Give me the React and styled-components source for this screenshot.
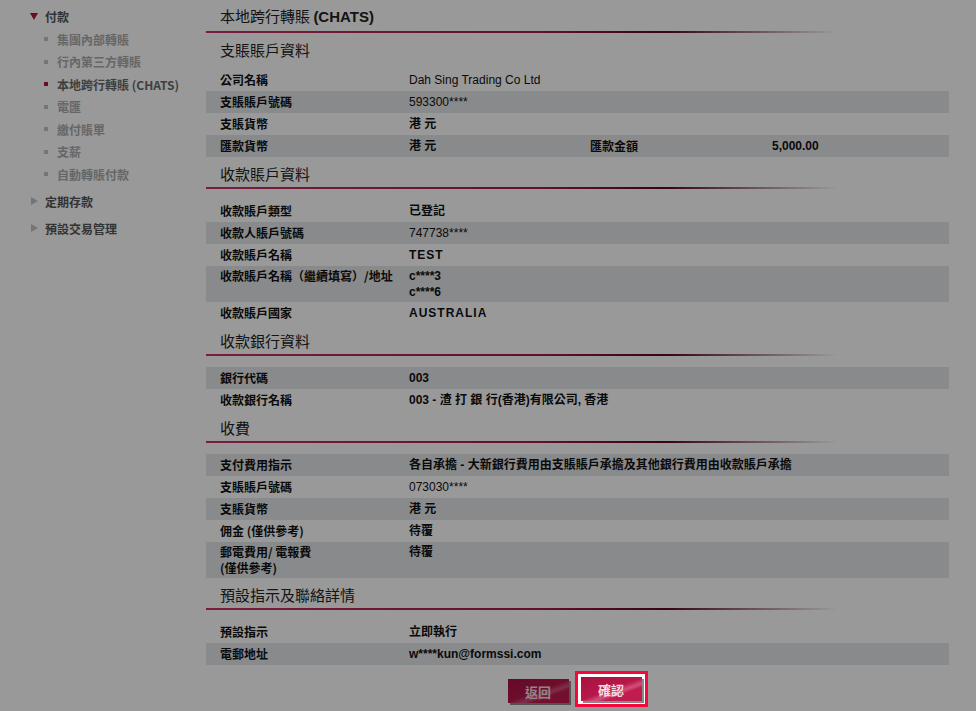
import React from 'react';
import styled, {createGlobalStyle} from 'styled-components';

const GlobalStyle = createGlobalStyle`
    html, body {
        margin: 0;
        padding: 0;
        background: #fff;
    }
    body {
        font-family: "Liberation Sans", "Noto Sans CJK TC", sans-serif;
        font-size: 12px;
        color: #000;
    }
`;

const menu = [
    {label: '付款', open: true, children: [
        {label: '集團內部轉賬'},
        {label: '行內第三方轉賬'},
        {label: '本地跨行轉賬 (CHATS)', active: true},
        {label: '電匯'},
        {label: '繳付賬單'},
        {label: '支薪'},
        {label: '自動轉賬付款'},
    ]},
    {label: '定期存款'},
    {label: '預設交易管理'},
];

// striped follows a running count across the whole page
const sections = [
    {title: '支賬賬戶資料', noLine: true, rows: [
        {label: '公司名稱', value: 'Dah Sing Trading Co Ltd', plain: true},
        {label: '支賬賬戶號碼', value: '593300****', plain: true},
        {label: '支賬貨幣', value: '港 元'},
        {label: '匯款貨幣', value: '港 元', label2: '匯款金額', value2: '5,000.00'},
    ]},
    {title: '收款賬戶資料', rows: [
        {label: '收款賬戶類型', value: '已登記'},
        {label: '收款人賬戶號碼', value: '747738****', plain: true},
        {label: '收款賬戶名稱', value: 'TEST', wide: true},
        {label: '收款賬戶名稱（繼續填寫）/地址', value: ['c****3', 'c****6']},
        {label: '收款賬戶國家', value: 'AUSTRALIA', wide: true},
    ]},
    {title: '收款銀行資料', rows: [
        {label: '銀行代碼', value: '003'},
        {label: '收款銀行名稱', value: '003 - 渣 打 銀 行(香港)有限公司, 香港'},
    ]},
    {title: '收費', rows: [
        {label: '支付費用指示', value: '各自承擔 - 大新銀行費用由支賬賬戶承擔及其他銀行費用由收款賬戶承擔'},
        {label: '支賬賬戶號碼', value: '073030****', plain: true},
        {label: '支賬貨幣', value: '港 元'},
        {label: '佣金 (僅供參考)', value: '待覆'},
        {label: ['郵電費用/ 電報費', '(僅供參考)'], value: '待覆'},
    ]},
    {title: '預設指示及聯絡詳情', rows: [
        {label: '預設指示', value: '立即執行'},
        {label: '電郵地址', value: 'w****kun@formssi.com'},
    ]},
];

const lines = (v) => Array.isArray(v) ? v.map((t, i) => <div key={i}>{t}</div>) : v;

const App = () => {
    let count = 0;
    return (
        <>
        <GlobalStyle />
        <Page>
            <Sidebar>
                {menu.map((m) => (
                    <MenuGroup key={m.label}>
                        <MenuItem>
                            <Arrow $open={m.open} />
                            {m.label}
                        </MenuItem>
                        {m.children && m.children.map((c) => (
                            <SubItem key={c.label} $active={c.active}>
                                <Bullet $active={c.active} />
                                {c.label}
                            </SubItem>
                        ))}
                    </MenuGroup>
                ))}
            </Sidebar>

            <Main>
                <PageTitle>本地跨行轉賬 <b>(CHATS)</b></PageTitle>
                <Underline />
                {sections.map((s) => (
                    <Section key={s.title}>
                        <SectionTitle>{s.title}</SectionTitle>
                        {!s.noLine && <Underline />}
                        <Rows $noLine={s.noLine}>
                            {s.rows.map((r, i) => {
                                count += 1;
                                const tall = Array.isArray(r.label) || Array.isArray(r.value);
                                return (
                                    <Row key={i} $striped={count % 2 === 0} $tall={tall}>
                                        <Label>{lines(r.label)}</Label>
                                        <Value $plain={r.plain} $wide={r.wide}>{lines(r.value)}</Value>
                                        {r.label2 && <Label>{r.label2}</Label>}
                                        {r.value2 && <Value>{r.value2}</Value>}
                                    </Row>
                                );
                            })}
                        </Rows>
                    </Section>
                ))}

                <Actions>
                    <Button>返回</Button>
                    <Highlight>
                        <Button>確認</Button>
                    </Highlight>
                </Actions>
            </Main>
        </Page>
        <Dimmer />
        </>
    )
}

const Page = styled.div`
    display: flex;
    width: 976px;
    min-height: 711px;
`;

const Sidebar = styled.div`
    width: 206px;
    flex-shrink: 0;
    padding-top: 5px;
    font-family: "Noto Sans CJK TC", "Liberation Sans", sans-serif;
    font-size: 12px;
    font-weight: bold;
`;

const MenuGroup = styled.div`
    margin-bottom: 4px;
`;

const MenuItem = styled.div`
    display: flex;
    align-items: center;
    height: 23px;
    padding-left: 30px;
    color: #555;
`;

const Arrow = styled.span`
    width: 0;
    height: 0;
    margin-right: 7px;
    ${({$open}) => $open ? `
        border-left: 4px solid transparent;
        border-right: 4px solid transparent;
        border-top: 7px solid #b0163f;
    ` : `
        border-top: 4px solid transparent;
        border-bottom: 4px solid transparent;
        border-left: 7px solid #c4c4c4;
        margin-left: 1px;
    `}
`;

const SubItem = styled.div`
    display: flex;
    align-items: center;
    height: 22.5px;
    padding-left: 44px;
    color: ${({$active}) => $active ? '#6a6a6a' : '#ababab'};
    &:first-of-type {
        margin-top: -1px;
    }
`;

const Bullet = styled.span`
    width: 4px;
    height: 4px;
    margin-right: 9px;
    background: ${({$active}) => $active ? '#b0163f' : '#c4c4c4'};
`;

const Main = styled.div`
    width: 743px;
    display: flex;
    flex-direction: column;
`;

const PageTitle = styled.div`
    padding: 7px 0 5px 14px;
    line-height: 18px;
    font-size: 15px;
    font-family: "Noto Sans CJK TC", "Liberation Sans", sans-serif;
    color: #222;
    b {
        font-family: "Liberation Sans", sans-serif;
    }
`;

const Underline = styled.div`
    height: 2px;
    background: linear-gradient(90deg, #c8326a 0%, #a8184b 45%, #5e0823 62%, rgba(255,255,255,0) 85%);
`;

const Section = styled.div`
    display: flex;
    flex-direction: column;
`;

const SectionTitle = styled.div`
    padding: 8px 0 4px 14px;
    line-height: 18px;
    font-size: 15px;
    font-family: "Noto Sans CJK TC", "Liberation Sans", sans-serif;
    color: #222;
`;

const Rows = styled.div`
    margin-top: ${({$noLine}) => $noLine ? '6px' : '11px'};
`;

const Row = styled.div`
    display: grid;
    grid-template-columns: 189px 181px 182px 1fr;
    padding: ${({$tall}) => $tall ? '2px 0 2px 14px' : '4px 0 4px 14px'};
    line-height: ${({$tall}) => $tall ? '16px' : '14px'};
    background: ${({$striped}) => $striped ? '#e4e6e8' : 'transparent'};
`;

const Label = styled.div`
    font-family: "Noto Sans CJK TC", "Liberation Sans", sans-serif;
    font-weight: bold;
    font-size: 12px;
    color: #111;
`;

const Value = styled.div`
    font-weight: ${({$plain}) => $plain ? 'normal' : 'bold'};
    letter-spacing: ${({$wide}) => $wide ? '1px' : '0'};
    white-space: nowrap;
    color: #111;
`;

const Actions = styled.div`
    display: flex;
    justify-content: center;
    align-items: flex-start;
    gap: 6px;
    margin-top: 6px;
`;

const Highlight = styled.div`
    position: relative;
    z-index: 20;
    border: 3px solid #f5093b;
    padding: 3px;
    background: #fff;
`;

const Button = styled.button`
    width: 61px;
    height: 24px;
    margin-top: 8px;
    border: none;
    padding: 0;
    color: #f3dde3;
    font-family: "Noto Sans CJK TC", "Liberation Sans", sans-serif;
    font-size: 13px;
    font-weight: bold;
    background: linear-gradient(160deg, #a5123f 0%, #b8184a 50%, #d2507a 62%, #c21d50 70%, #c01a4d 100%);
    box-shadow: 2px 2px 0 #8a8a8a;
    cursor: pointer;
    ${Highlight} & {
        margin-top: 0;
    }
`;

const Dimmer = styled.div`
    position: fixed;
    inset: 0;
    z-index: 10;
    background: rgba(0, 0, 0, 0.4);
`;

export default App;
